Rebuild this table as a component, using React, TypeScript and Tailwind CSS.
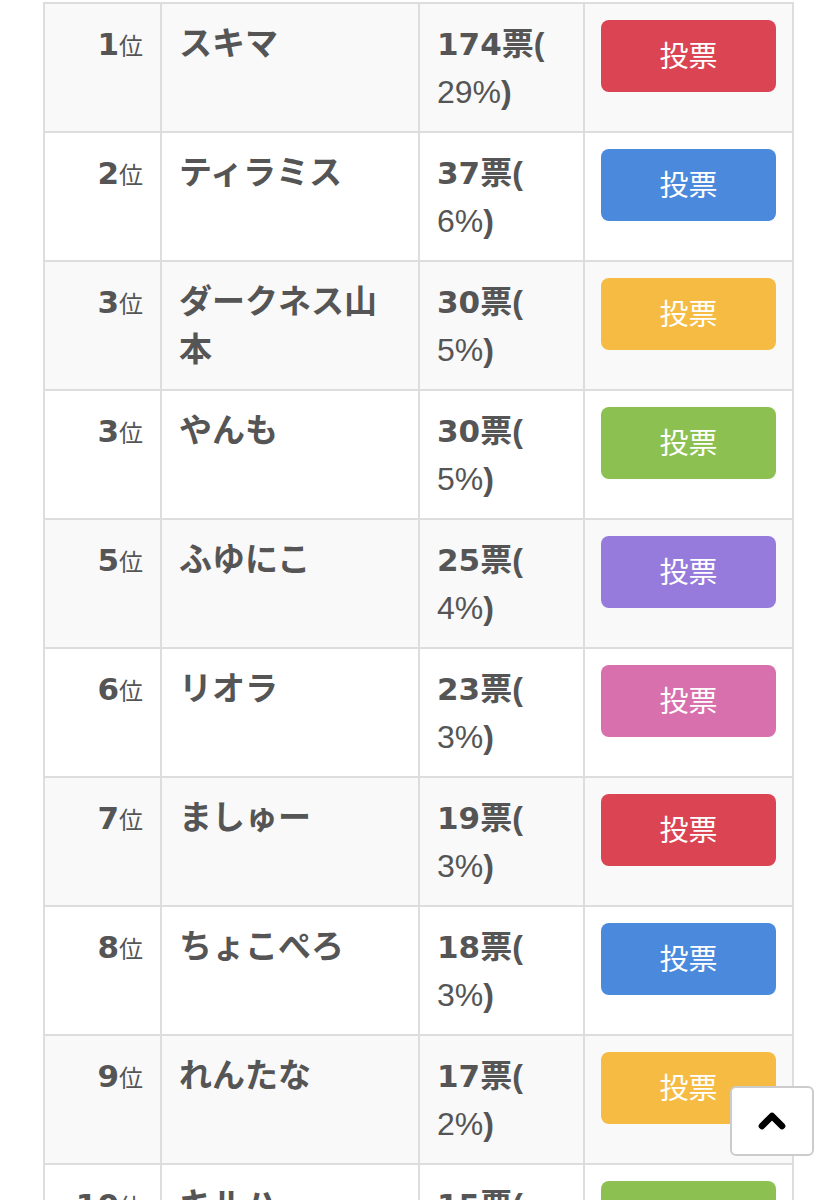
import { ChevronUp } from "lucide-react";

const rows = [
  { rank: 1, name: "スキマ", votes: 174, pct: 29, color: "bg-[#da4453]" },
  { rank: 2, name: "ティラミス", votes: 37, pct: 6, color: "bg-[#4a89dc]" },
  { rank: 3, name: "ダークネス山本", votes: 30, pct: 5, color: "bg-[#f6bb42]" },
  { rank: 3, name: "やんも", votes: 30, pct: 5, color: "bg-[#8cc152]" },
  { rank: 5, name: "ふゆにこ", votes: 25, pct: 4, color: "bg-[#967adc]" },
  { rank: 6, name: "リオラ", votes: 23, pct: 3, color: "bg-[#d770ad]" },
  { rank: 7, name: "ましゅー", votes: 19, pct: 3, color: "bg-[#da4453]" },
  { rank: 8, name: "ちょこぺろ", votes: 18, pct: 3, color: "bg-[#4a89dc]" },
  { rank: 9, name: "れんたな", votes: 17, pct: 2, color: "bg-[#f6bb42]" },
  { rank: 10, name: "キルハ", votes: 15, pct: 2, color: "bg-[#8cc152]" },
];

export default function App() {
  return (
    <div className="relative h-[1200px] overflow-hidden bg-white text-[#555] font-['Liberation_Sans','Noto_Sans_CJK_JP',sans-serif]">
      <table className="ml-[43px] mt-[2px] w-[749px] table-fixed border-collapse">
        <colgroup>
          <col className="w-[117px]" />
          <col className="w-[258px]" />
          <col className="w-[165px]" />
          <col className="w-[209px]" />
        </colgroup>
        <tbody>
          {rows.map((r, i) => (
            <tr key={i} className={i % 2 === 0 ? "bg-[#f9f9f9]" : "bg-white"}>
              <td className="border-2 border-[#dddddd] pt-4 pb-[15px] pr-[17px] text-right align-top leading-[48px]">
                <span className="font-['DejaVu_Sans',sans-serif] text-[31px] font-bold">{r.rank}</span>
                <span className="text-[24px]">位</span>
              </td>
              <td className="border-2 border-[#dddddd] pt-4 pb-[15px] pl-[17px] pr-4 align-top text-[33px] font-bold leading-[48px]">
                {r.name}
              </td>
              <td className="border-2 border-[#dddddd] pt-4 pb-[15px] pl-[17px] pr-1 align-top text-[32px] leading-[48px]">
                <div className="font-bold">
                  <span className="font-['DejaVu_Sans',sans-serif] text-[31px]">{r.votes}</span>
                  票(
                </div>
                <div>
                  {r.pct}%<span className="font-bold">)</span>
                </div>
              </td>
              <td className="border-2 border-[#dddddd] pt-4 pb-[15px] px-4 align-top">
                <button
                  className={`${r.color} flex h-[72px] w-full items-center justify-center rounded-lg pt-1 text-[29px] text-white`}
                >
                  投票
                </button>
              </td>
            </tr>
          ))}
        </tbody>
      </table>

      {/* back to top */}
      <button className="absolute right-[22px] bottom-[44px] flex h-[70px] w-[84px] items-center justify-center rounded-md border-2 border-[#cccccc] bg-white text-black">
        <ChevronUp size={40} strokeWidth={4} />
      </button>
    </div>
  );
}
